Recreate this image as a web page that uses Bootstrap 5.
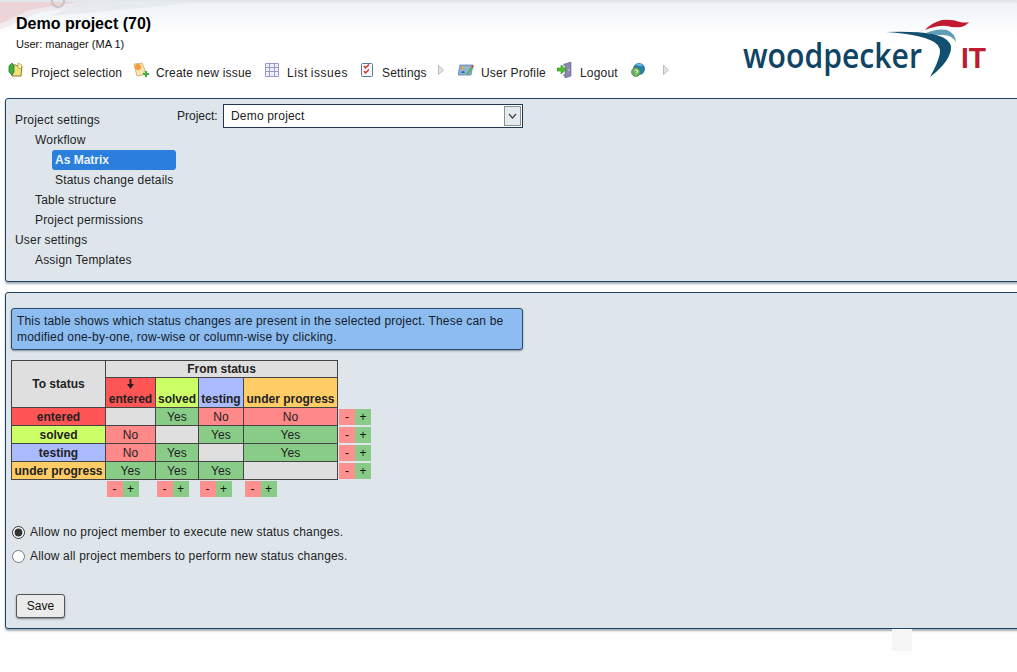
<!DOCTYPE html>
<html lang="en">
<head>
<meta charset="utf-8">
<title>Demo project</title>
<link href="https://cdn.jsdelivr.net/npm/bootstrap@5.3.0/dist/css/bootstrap.min.css" rel="stylesheet">
<style>
html,body{height:100%}
body{font-family:"Liberation Sans",Arial,sans-serif;font-size:12px;line-height:16px;color:#222;background:#fefefe;overflow:hidden;letter-spacing:.18px}
.top-head{height:98px;position:relative;background:linear-gradient(#e3e6ea 0,#e3e6ea 2px,#eef2f7 3px,#ffffff 36px);overflow:hidden}
.head-deco{position:absolute;left:0;top:0}
.head-left{position:relative;padding:15px 0 0 8px}
.page-title{font-size:16px;line-height:18px;font-weight:700;color:#000;margin:0 0 0 8px;letter-spacing:0}
.user-line{font-size:11px;line-height:14px;margin:4px 0 0 8px;letter-spacing:0;color:#111}
.top-menu{gap:11px;margin-top:10px;height:20px}
.menu-item{display:flex;align-items:center;gap:7px;color:#222;text-decoration:none;font-size:12px;line-height:16px}
.menu-item svg{margin-bottom:2px}
.menu-item span{position:relative;top:2px;white-space:nowrap}
.mi-select{width:91px}
.mi-create{width:97px}
.mi-list{width:61px;word-spacing:-1px;letter-spacing:.55px}
.mi-settings{width:45px}
.mi-profile{width:65px}
.mi-logout{width:39px}
.help-icon{margin-bottom:2px}
.menu-arrow{margin-right:3px;margin-bottom:2px}
.menu-arrow-end{margin-left:6px;margin-bottom:2px}
.logo-svg{position:relative;flex:none}
.logo-word{font-family:"Open Sans",sans-serif;font-size:34px;font-weight:600;fill:#0f4464;letter-spacing:0}
.logo-it{font-family:"Liberation Sans",sans-serif;font-weight:700;font-size:30px;fill:#c01a30;letter-spacing:0}
.pane{background:#dee6ec;border:1px solid #1f4262;border-radius:3px;box-shadow:0 2px 2px rgba(60,80,100,.45);margin:0 -10px 0 5px}
.pane-nav{height:184px;margin-top:0;padding:11px 0 0 9px}
.pane-matrix{height:337px;margin-top:10px;padding:15px 0 0 5px}
.tree{width:162px;flex:none}
.tree .nav-link{color:#222;padding:0;height:20px;line-height:20px;font-size:12px;border-radius:3px}
.tree .lvl2{margin-left:20px}
.tree .lvl3{margin-left:37px;padding-left:3px;width:124px}
.tree .nav-link.active{background:#2a7fdc;color:#eaf3ff;font-weight:700;letter-spacing:0}
.project-field{gap:5px;margin-top:-6px;margin-left:0;height:24px}
.project-label{width:41px;white-space:nowrap;letter-spacing:0}
.project-select{width:300px;height:24px;padding:0 0 0 7px;font-size:12px;line-height:20px;color:#222;border:1px solid #1f3550;border-radius:0;background-color:#fff;letter-spacing:.18px;
background-image:url("data:image/svg+xml,%3Csvg xmlns='http://www.w3.org/2000/svg' width='17' height='20'%3E%3Crect x='.5' y='.5' width='16' height='19' fill='%23e6e9ed' stroke='%238a8f96'/%3E%3Cpath d='M5 8l3.500 4L12 8' fill='none' stroke='%23444' stroke-width='1.200'/%3E%3C/svg%3E");background-repeat:no-repeat;background-position:right 1px center;background-size:17px 20px}
.info-note{width:512px;height:42px;background:#8cbcf0;border:1px solid #2c4a6a;border-radius:3px;box-shadow:0 1px 2px rgba(40,60,80,.5);padding:4px 5px;line-height:16px;color:#15202c}
.matrix{margin-top:10px;border-collapse:collapse;table-layout:fixed;width:359px;letter-spacing:0}
.matrix th,.matrix td{border:1px solid #444;padding:0;text-align:center;font-size:12px;line-height:16px}
.matrix td{letter-spacing:.18px}
.matrix td.side,.matrix td.under{border:0;background:transparent;vertical-align:top}
.matrix .h-gray{background:#dfdfdf}
.matrix .h-top{height:16px}
.matrix .h-sec{height:29px;vertical-align:bottom}
.matrix .h-first{padding-top:1px}
.sort-arrow{display:block;margin:0 auto 2px}
.matrix .rowh{height:18px;font-weight:700}
.c-red{background:#ff5555}
.c-lime{background:#ccff66}
.c-blue{background:#aabbff}
.c-orange{background:#ffcc66}
.v-no{background:#ff8888}
.v-yes{background:#88cc88}
.v-none{background:#dfdfdf}
.pm{display:inline-flex;vertical-align:top}
.pm span{width:16px;height:16px;line-height:16px;font-size:12px;text-align:center;color:#111;font-weight:400;letter-spacing:0}
.pm .m{background:#ff9090}
.pm .p{background:#88cc88}
.side .pm{margin:1px 0 0 1px}
.matrix td.under{text-align:left}
.under .pm{margin:1px 0 0 1px}
.radio-block{margin-top:23px;padding-left:1px}
.radio-row{display:flex;align-items:center;gap:5px;height:24px;margin:0}
.radio-row input{width:13px;height:13px;margin:0;accent-color:#333}
.save-btn{margin:26px 0 0 5px;width:49px;height:24px;padding:0;font-size:12px;line-height:20px;color:#111;background:#ebebeb;border:1px solid #555;border-radius:3px;box-shadow:0 1px 2px rgba(0,0,0,.45)}
.foot-tile{width:20px;height:22px;margin-left:892px;background:#f6f6f6}
</style>
</head>
<body>
<header class="top-head d-flex justify-content-between">
  <svg class="head-deco" width="240" height="30" viewBox="0 0 240 30" aria-hidden="true">
    <path d="M0 2H78L30 10 0 24Z" fill="#e9c9cc" opacity=".75"/>
    <path d="M78 2L30 10 0 24V30L40 12 120 3Z" fill="#eddfe2" opacity=".6"/>
    <path d="M80 3L190 3 130 9 50 16Z" fill="#e4e8ee" opacity=".8"/>
    <circle cx="58" cy="1" r="6" fill="none" stroke="#c4c4c8" stroke-width="2"/>
  </svg>
  <div class="head-left">
    <h1 class="page-title">Demo project (70)</h1>
    <p class="user-line">User: manager (MA 1)</p>
    <nav class="top-menu d-flex align-items-center">
      <a class="menu-item" href="#"><svg width="16" height="16" viewBox="0 0 16 16"><path d="M4 3h4l1 1h5l-1 10H4z" fill="#f3e27a" stroke="#8a7a2a"/><path d="M1 4l3-3 2 3v6l-2 3-3-3z" fill="#3fae3f" stroke="#1e6e2a" stroke-width=".7"/><path d="M10 1l4 2-1 4-3-1z" fill="#fbf3b0" stroke="#a0903a" stroke-width=".6"/></svg><span class="mi-select">Project selection</span></a>
      <a class="menu-item" href="#"><svg width="16" height="16" viewBox="0 0 16 16"><path d="M1 2l8-1 3 7-2 5-6 1z" fill="#f7e2b0" stroke="#c9a86a" stroke-width=".8"/><circle cx="5" cy="5" r="3" fill="#f59a3a"/><path d="M10 11h2V9h2v2h2v2h-2v2h-2v-2h-2z" fill="#3fae3f"/></svg><span class="mi-create">Create new issue</span></a>
      <a class="menu-item" href="#"><svg width="16" height="16" viewBox="0 0 16 16"><path d="M1.500 1.500h13v13h-13zM1.500 5.500h13M1.500 9.500h13M5.500 1.500v13M10.500 1.500v13" fill="#eeeeff" stroke="#9a9ac0"/></svg><span class="mi-list">List issues</span></a>
      <a class="menu-item" href="#"><svg width="16" height="16" viewBox="0 0 16 16"><rect x="2.500" y="1.500" width="11" height="13" rx="1" fill="#f4f6fa" stroke="#5a7a9a"/><path d="M5 4l1.500 2L10 2.500M5 9l1.500 2L10 7.500" fill="none" stroke="#c8302a" stroke-width="1.400"/></svg><span class="mi-settings">Settings</span></a>
      <svg class="menu-arrow" width="6" height="10" viewBox="0 0 6 10"><path d="M.5.500L5.500 5 .5 9.500z" fill="#e2e2e2" stroke="#bbb"/></svg>
      <a class="menu-item" href="#"><svg width="16" height="16" viewBox="0 0 16 16"><path d="M2 3h13l-2 10H0z" fill="#8cb4dc" stroke="#4a74a0" stroke-width=".7"/><circle cx="5" cy="6" r="1.800" fill="#f0a040"/><path d="M3 11q2-4 4 0z" fill="#3060a0"/><path d="M8 12l5-7 2 1-5 7z" fill="#5ab04a"/><path d="M13 5l1-2 2 1-1 2z" fill="#d84a3a"/></svg><span class="mi-profile">User Profile</span></a>
      <a class="menu-item" href="#"><svg width="16" height="16" viewBox="0 0 16 16"><path d="M8 2l6-2v14l-6 2z" fill="#8a8ab0" stroke="#5a5a80" stroke-width=".6"/><path d="M8 2h-1v2M8 14H7v-2" fill="none" stroke="#6a6a90"/><circle cx="12" cy="8" r=".8" fill="#dde"/><path d="M0 6h4V3l5 4.500L4 12V9H0z" fill="#4ec02e" stroke="#2a8a1a" stroke-width=".6"/></svg><span class="mi-logout">Logout</span></a>
      <svg class="help-icon" width="16" height="16" viewBox="0 0 16 16"><circle cx="9" cy="7" r="6" fill="#2a7fb0"/><path d="M5 3q5-3 8 1-4 0-8-1z" fill="#6ec0e0"/><circle cx="6" cy="10" r="4.500" fill="#6aae5a" stroke="#3a7a3a" stroke-width=".6"/><path d="M4.500 8.500q1.500-1.500 3 0T6 10.500M6 11.500v1" fill="none" stroke="#fff" stroke-width="1"/></svg>
      <svg class="menu-arrow-end" width="6" height="10" viewBox="0 0 6 10"><path d="M.5.500L5.500 5 .5 9.500z" fill="#e2e2e2" stroke="#bbb"/></svg>
    </nav>
  </div>
  <svg class="logo-svg" width="297" height="98" viewBox="720 0 297 98" role="img" aria-label="woodpecker IT">
    <text class="logo-word" x="743" y="68" textLength="179" lengthAdjust="spacingAndGlyphs">woodpecker</text>
    <text class="logo-it" x="961" y="68" textLength="25" lengthAdjust="spacingAndGlyphs">IT</text>
    <path d="M925 30q6-7 17-10 10-1 18 2 5 1 9 0-3 4-8 5-7 1-14-1-9-1-22 4z" fill="#c01a30"/>
    <path d="M926 33q12-5 21-3 8 3 9 12-5-8-15-7-8 0-15-2z" fill="#5e9db4"/>
    <path d="M886 32q30-1 46 2 16 3 19 12 1 14-21 31 8-14 10-24 1-9-10-13-14-6-44-8z" fill="#12506f"/>
  </svg>
</header>

<main>
  <section class="pane pane-nav d-flex">
    <nav class="tree nav nav-pills flex-column flex-nowrap">
      <a class="nav-link" href="#">Project settings</a>
      <a class="nav-link lvl2" href="#">Workflow</a>
      <a class="nav-link lvl3 active" href="#">As Matrix</a>
      <a class="nav-link lvl3" href="#">Status change details</a>
      <a class="nav-link lvl2" href="#">Table structure</a>
      <a class="nav-link lvl2" href="#">Project permissions</a>
      <a class="nav-link" href="#">User settings</a>
      <a class="nav-link lvl2" href="#">Assign Templates</a>
    </nav>
    <div class="project-field d-flex align-items-center">
      <label class="project-label" for="projectSel">Project:</label>
      <select id="projectSel" class="form-select project-select"><option>Demo project</option></select>
    </div>
  </section>

  <section class="pane pane-matrix">
    <div class="info-note">This table shows which status changes are present in the selected project. These can be modified one-by-one, row-wise or column-wise by clicking.</div>
    <table class="matrix">
      <colgroup><col style="width:94px"><col style="width:50px"><col style="width:43px"><col style="width:45px"><col style="width:94px"><col style="width:33px"></colgroup>
      <tr><th rowspan="2" class="h-gray">To status</th><th colspan="4" class="h-gray h-top">From status</th><td class="side"></td></tr>
      <tr>
        <th class="h-sec h-first c-red"><svg class="sort-arrow" width="7" height="10" viewBox="0 0 7 10"><path d="M2.500 0h2v5H7L3.500 10 0 5h2.500z" fill="#222"/></svg>entered</th>
        <th class="h-sec c-lime">solved</th><th class="h-sec c-blue">testing</th><th class="h-sec c-orange">under progress</th><td class="side"></td>
      </tr>
      <tr><th class="rowh c-red">entered</th><td class="v-none"></td><td class="v-yes">Yes</td><td class="v-no">No</td><td class="v-no">No</td><td class="side"><div class="pm"><span class="m">-</span><span class="p">+</span></div></td></tr>
      <tr><th class="rowh c-lime">solved</th><td class="v-no">No</td><td class="v-none"></td><td class="v-yes">Yes</td><td class="v-yes">Yes</td><td class="side"><div class="pm"><span class="m">-</span><span class="p">+</span></div></td></tr>
      <tr><th class="rowh c-blue">testing</th><td class="v-no">No</td><td class="v-yes">Yes</td><td class="v-none"></td><td class="v-yes">Yes</td><td class="side"><div class="pm"><span class="m">-</span><span class="p">+</span></div></td></tr>
      <tr><th class="rowh c-orange">under progress</th><td class="v-yes">Yes</td><td class="v-yes">Yes</td><td class="v-yes">Yes</td><td class="v-none"></td><td class="side"><div class="pm"><span class="m">-</span><span class="p">+</span></div></td></tr>
      <tr><td class="under"></td><td class="under"><div class="pm"><span class="m">-</span><span class="p">+</span></div></td><td class="under"><div class="pm"><span class="m">-</span><span class="p">+</span></div></td><td class="under"><div class="pm"><span class="m">-</span><span class="p">+</span></div></td><td class="under"><div class="pm"><span class="m">-</span><span class="p">+</span></div></td><td class="under"></td></tr>
    </table>
    <div class="radio-block">
      <label class="radio-row"><input type="radio" name="perm" checked>Allow no project member to execute new status changes.</label>
      <label class="radio-row"><input type="radio" name="perm">Allow all project members to perform new status changes.</label>
    </div>
    <button type="button" class="btn save-btn">Save</button>
  </section>
  <div class="foot-tile"></div>
</main>
<script src="https://cdn.jsdelivr.net/npm/bootstrap@5.3.0/dist/js/bootstrap.bundle.min.js"></script>
</body>
</html>
